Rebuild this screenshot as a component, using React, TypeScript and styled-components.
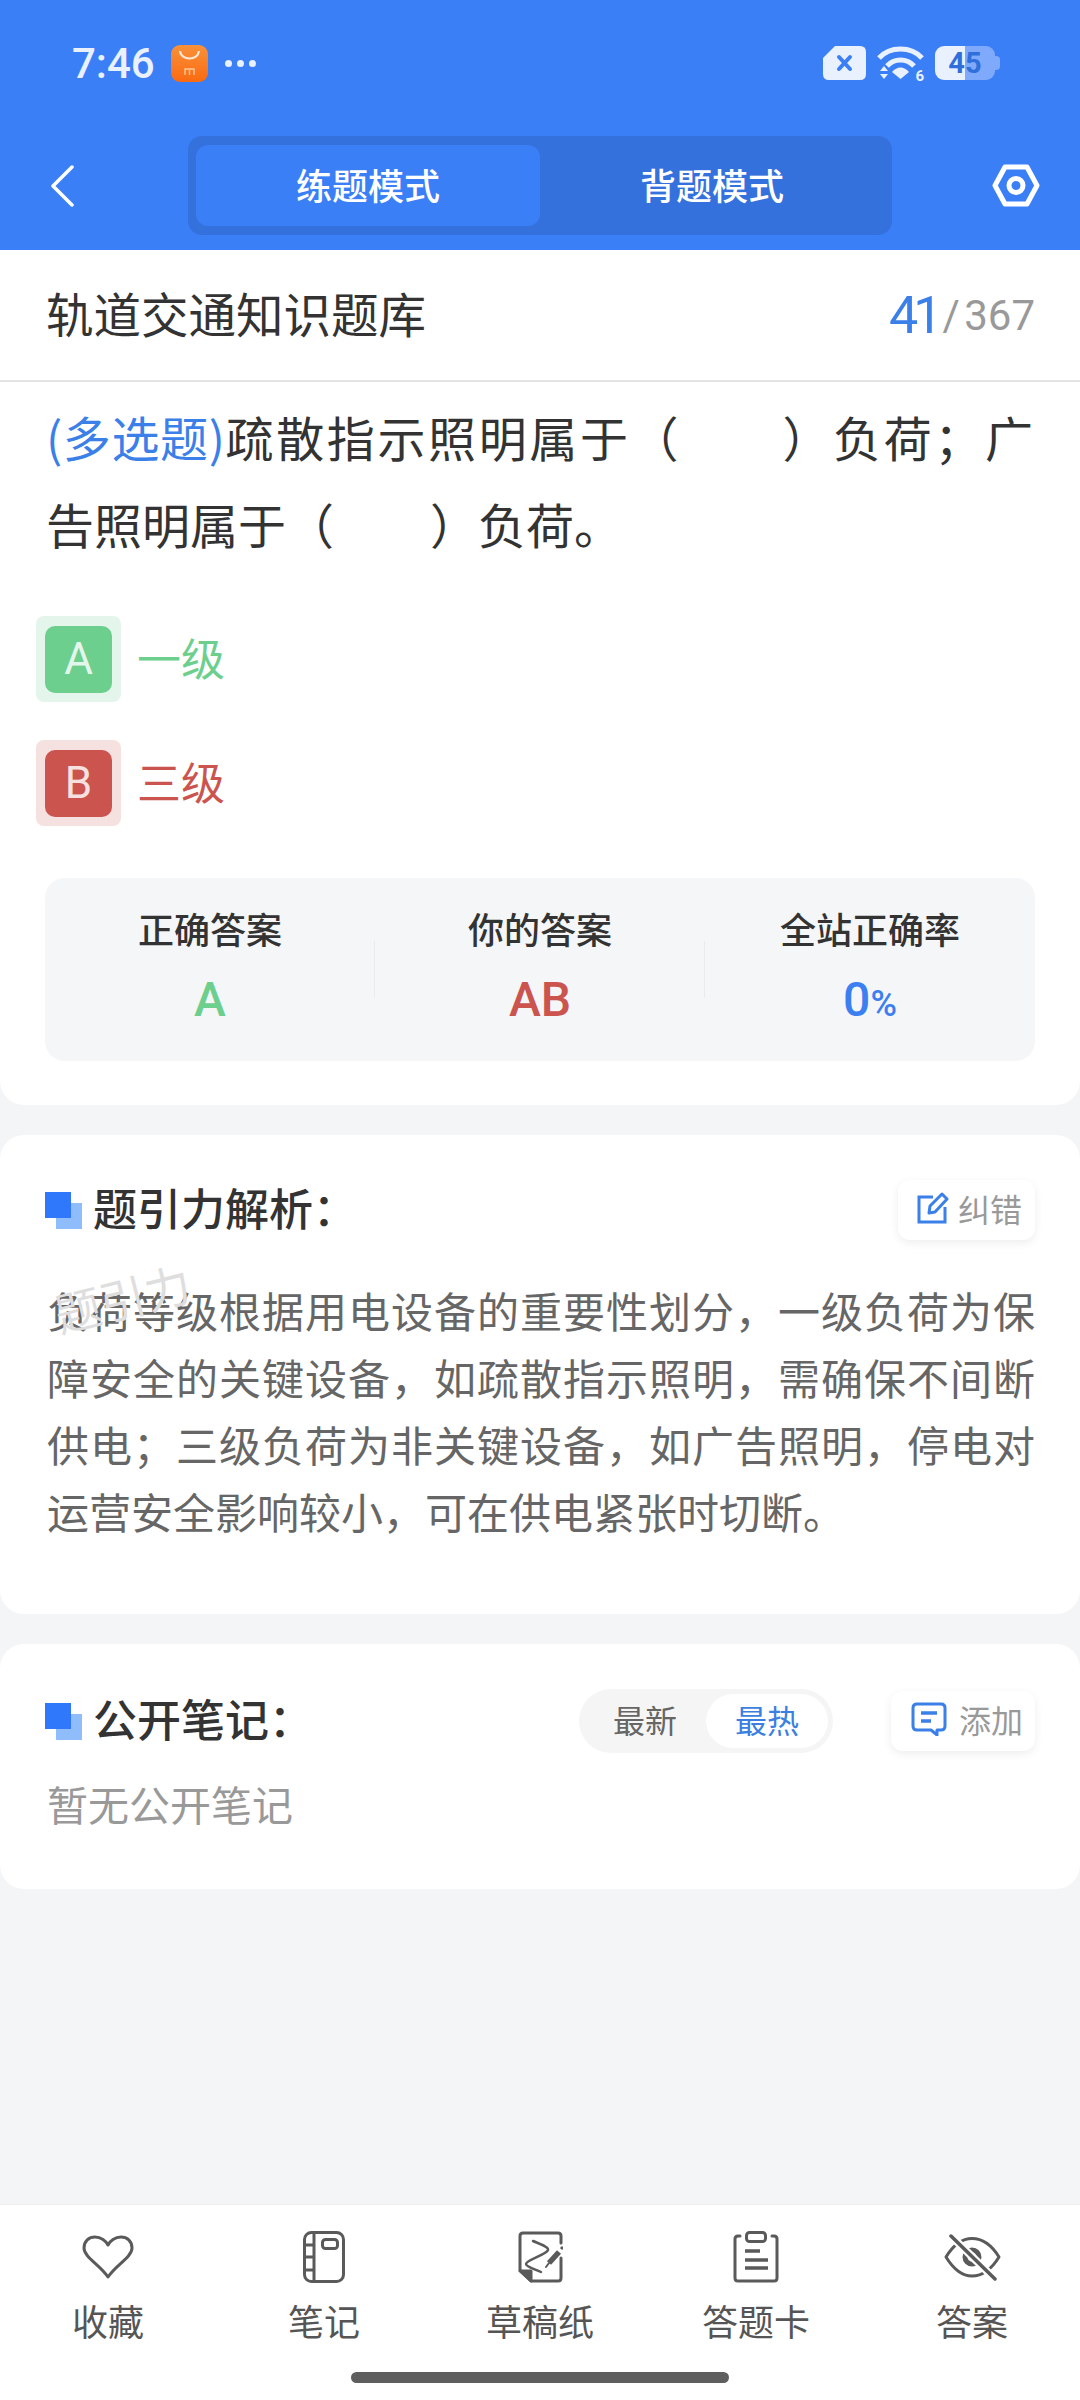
import React from 'react';
import styled, { createGlobalStyle } from 'styled-components';

const GlobalStyle = createGlobalStyle`
  html, body {
    margin: 0;
    padding: 0;
    background: #f4f5f7;
  }
  * {
    box-sizing: border-box;
  }
  body {
    font-family: "Noto Sans CJK SC", "Noto Sans", sans-serif;
    color: #333;
  }
`;

const SUMMARY = [
  { label: '正确答案', value: 'A', color: '#6dcf8e' },
  { label: '你的答案', value: 'AB', color: '#cb544f' },
  { label: '全站正确率', value: '0', unit: '%', color: '#3b7ff0' },
];

function HeartIcon() {
  return (
    <svg width="52" height="44" viewBox="0 0 52 44" fill="none" stroke="#5a5a5a" strokeWidth="3" strokeLinejoin="round">
      <path d="M26 42C18 30 2 22 2 13C2 6 7 2 13 2C19 2 24 6 26 10C28 6 33 2 39 2C45 2 50 6 50 13C50 22 34 30 26 42Z" />
    </svg>
  );
}

function NotebookIcon() {
  return (
    <svg width="42" height="52" viewBox="0 0 42 52" fill="none" stroke="#5a5a5a" strokeWidth="3">
      <rect x="1.500" y="1.500" width="39" height="49" rx="7" />
      <path d="M11 2V50M2 14H11M2 26H11M2 39H11" />
      <rect x="19.500" y="8.500" width="15" height="9" rx="3" />
    </svg>
  );
}

function DraftIcon() {
  return (
    <svg width="45" height="52" viewBox="0 0 45 52" fill="none" stroke="#5a5a5a" strokeWidth="3" strokeLinejoin="round" strokeLinecap="round">
      <path d="M43 12V5Q43 2 40 2H5Q2 2 2 5V39L13 50H40Q43 50 43 47V27" />
      <path d="M2 40H13V50Z" fill="#5a5a5a" />
      <path d="M15 10C22 13 31 16 30 19C28 24 8 29 8 33C8 36 17 38 23 41" strokeWidth="2.500" />
      <path d="M31 32L41 21" strokeWidth="5.500" strokeLinecap="butt" />
      <path d="M28 36L31 32" strokeWidth="2" />
      <path d="M43 18L45 16" strokeWidth="3" strokeLinecap="butt" />
    </svg>
  );
}

function ClipboardIcon() {
  return (
    <svg width="46" height="52" viewBox="0 0 46 52" fill="none" stroke="#5a5a5a" strokeWidth="3" strokeLinecap="round">
      <path d="M7 5H5Q2 5 2 8V47Q2 50 5 50H41Q44 50 44 47V8Q44 5 41 5H39" />
      <rect x="13.500" y="1.500" width="19" height="9" rx="3" />
      <path d="M12 20H27M12 29H35M12 37H35" strokeWidth="3.500" strokeLinecap="butt" />
    </svg>
  );
}

function EyeOffIcon() {
  return (
    <svg width="57" height="47" viewBox="0 0 57 47" fill="none" stroke="#5a5a5a" strokeWidth="3" strokeLinejoin="round">
      <path d="M2 23C10 10 18 4.500 28 4.500C38 4.500 47 10 55 23C47 36 38 42 28 42C18 42 10 36 2 23Z" />
      <circle cx="28" cy="23" r="7" strokeWidth="5" />
      <path d="M7 2L51 45" stroke="#ffffff" strokeWidth="8" />
      <path d="M7 2L51 45" strokeWidth="3.500" strokeLinecap="round" />
    </svg>
  );
}

const TOOLS = [
  { label: '收藏', icon: <HeartIcon /> },
  { label: '笔记', icon: <NotebookIcon /> },
  { label: '草稿纸', icon: <DraftIcon /> },
  { label: '答题卡', icon: <ClipboardIcon /> },
  { label: '答案', icon: <EyeOffIcon /> },
];

function SectionMark() {
  return (
    <svg width="37" height="37" viewBox="0 0 37 37">
      <rect x="11" y="11" width="26" height="26" fill="#8fbcfb" />
      <rect x="0" y="0" width="26" height="26" fill="#2f78fb" />
    </svg>
  );
}

function App() {
  return (
    <>
      <GlobalStyle />
      <Page>
        <Header>
          <StatusBar>
            <StatusLeft>
              <Time>7:46</Time>
              <svg width="37" height="37" viewBox="0 0 37 37">
                <defs>
                  <linearGradient id="shop" x1="0" y1="0" x2="0" y2="1">
                    <stop offset="0" stopColor="#f9913a" />
                    <stop offset="1" stopColor="#fb6a10" />
                  </linearGradient>
                </defs>
                <rect width="37" height="37" rx="9" fill="url(#shop)" />
                <path d="M9 6C10 16 27 16 28 6" fill="none" stroke="#ffe9d6" strokeWidth="2.200" />
                <path d="M14 30V24H23V30M18.500 25V30" fill="none" stroke="#ffc79c" strokeWidth="1.400" />
              </svg>
              <Dots>
                <i />
                <i />
                <i />
              </Dots>
            </StatusLeft>
            <StatusRight>
              <svg width="43" height="34" viewBox="0 0 43 34">
                <path d="M12 0H37Q43 0 43 6V28Q43 34 37 34H6Q0 34 0 28V12Z" fill="#eaf1fe" />
                <path d="M16 11L27 23M27 11L16 23" stroke="#3b7ff6" strokeWidth="4" strokeLinecap="round" />
              </svg>
              <WifiBox>
                <svg width="47" height="36" viewBox="0 0 47 36" fill="none">
                  <path d="M2 12C13 0 34 0 45 12" stroke="#eaf1fe" strokeWidth="5" />
                  <path d="M10 20C17 12 30 12 37 20" stroke="#eaf1fe" strokeWidth="5" />
                  <path d="M15 26C20 20 27 20 32 26L23.500 33Z" fill="#eaf1fe" />
                  <path d="M3 25L7 20L11 25ZM3 28L7 33L11 28Z" fill="#eaf1fe" />
                </svg>
                <WifiBand>6</WifiBand>
              </WifiBox>
              <Battery>
                <BatteryBody>45</BatteryBody>
              </Battery>
            </StatusRight>
          </StatusBar>
          <NavBar>
            <BackSlot>
              <svg width="24" height="42" viewBox="0 0 24 42" fill="none" stroke="#fff" strokeWidth="3.500" strokeLinecap="round" strokeLinejoin="round">
                <path d="M22 2L3 21L22 40" />
              </svg>
            </BackSlot>
            <ModeSwitch>
              <ModeTab $active>练题模式</ModeTab>
              <ModeTab>背题模式</ModeTab>
            </ModeSwitch>
            <SettingSlot>
              <svg width="48" height="43" viewBox="0 0 48 43" fill="none" stroke="#fff" strokeWidth="5" strokeLinejoin="round">
                <path d="M13 3H35L45 21.500L35 40H13L3 21.500Z" />
                <circle cx="24" cy="21.500" r="7" />
              </svg>
            </SettingSlot>
          </NavBar>
        </Header>

        <Main>
          <QuestionCard>
            <TitleRow>
              <BankTitle>轨道交通知识题库</BankTitle>
              <Counter>
                <CounterNow>41</CounterNow>
                <CounterTotal>/ 367</CounterTotal>
              </Counter>
            </TitleRow>
            <QuestionText>
              <QuestionLine $fill>
                <QuestionType>(多选题)</QuestionType>疏散指示照明属于（　　）负荷；广
              </QuestionLine>
              <QuestionLine>告照明属于（　　）负荷。</QuestionLine>
            </QuestionText>
            <Options>
              <Option>
                <OptionBadge $bg="#e4f6ec" $fg="#6dcf8e">
                  <span>A</span>
                </OptionBadge>
                <OptionText $color="#6dcf8e">一级</OptionText>
              </Option>
              <Option>
                <OptionBadge $bg="#f6e1e1" $fg="#cb544f">
                  <span>B</span>
                </OptionBadge>
                <OptionText $color="#cb544f">三级</OptionText>
              </Option>
            </Options>
            <Summary>
              {SUMMARY.map((item) => (
                <SummaryCell key={item.label}>
                  <SummaryLabel>{item.label}</SummaryLabel>
                  <SummaryValue $color={item.color}>
                    {item.value}
                    {item.unit && <small>{item.unit}</small>}
                  </SummaryValue>
                </SummaryCell>
              ))}
            </Summary>
          </QuestionCard>

          <AnalysisCard>
            <SectionHead>
              <SectionTitle>
                <SectionMark />
                <h2>题引力解析：</h2>
              </SectionTitle>
              <SideButton $left={19} $right={13} $gap={9}>
                <svg width="32" height="32" viewBox="0 0 32 32" fill="none" stroke="#3b7fe8" strokeWidth="3">
                  <path d="M16 5H2V30H28V15" />
                  <path d="M12 21L13 14L25 2L30 7L18 20Z" strokeLinejoin="round" />
                </svg>
                纠错
              </SideButton>
            </SectionHead>
            <AnalysisBody>
              <Watermark>题引力</Watermark>
              负荷等级根据用电设备的重要性划分，一级负荷为保障安全的关键设备，如疏散指示照明，需确保不间断供电；三级负荷为非关键设备，如广告照明，停电对运营安全影响较小，可在供电紧张时切断。
            </AnalysisBody>
          </AnalysisCard>

          <NotesCard>
            <SectionHead>
              <SectionTitle>
                <SectionMark />
                <h2>公开笔记：</h2>
              </SectionTitle>
              <NotesTools>
                <SortSwitch>
                  <SortItem>最新</SortItem>
                  <SortItem $active>最热</SortItem>
                </SortSwitch>
                <SideButton $left={20} $right={12} $gap={12}>
                  <svg width="36" height="34" viewBox="0 0 36 34" fill="none" stroke="#3b7fe8" strokeWidth="3" strokeLinejoin="round">
                    <path d="M6 2H30Q34 2 34 6V24Q34 28 30 28H26V33L20 28H6Q2 28 2 24V6Q2 2 6 2Z" />
                    <path d="M10 11H26M10 19H20" strokeWidth="3.500" />
                  </svg>
                  添加
                </SideButton>
              </NotesTools>
            </SectionHead>
            <EmptyNotes>暂无公开笔记</EmptyNotes>
          </NotesCard>
        </Main>

        <Footer>
          <ToolGrid>
            {TOOLS.map((tool) => (
              <Tool key={tool.label}>
                <ToolIcon>{tool.icon}</ToolIcon>
                <ToolLabel>{tool.label}</ToolLabel>
              </Tool>
            ))}
          </ToolGrid>
          <HomeBar />
        </Footer>
      </Page>
    </>
  );
}
export default App;

const Page = styled.div`
  display: flex;
  flex-direction: column;
  width: 1080px;
  height: 2400px;
  overflow: hidden;
`;

const Header = styled.header`
  height: 250px;
  background: #3b7ff6;
`;

const StatusBar = styled.div`
  display: flex;
  justify-content: space-between;
  height: 136px;
  padding: 45px 80px 0 72px;
`;

const StatusLeft = styled.div`
  display: flex;
  align-items: center;
  height: 37px;
  gap: 16px;
`;

const Time = styled.span`
  font-family: Roboto, sans-serif;
  font-size: 42px;
  font-weight: 500;
  color: #eaf1fe;
`;

const Dots = styled.div`
  display: flex;
  gap: 5px;
  margin-left: 1px;
  & > i {
    width: 7px;
    height: 7px;
    border-radius: 50%;
    background: #eaf1fe;
  }
`;

const StatusRight = styled.div`
  display: flex;
  align-items: flex-start;
  gap: 11px;
  padding-top: 1px;
`;

const WifiBox = styled.div`
  position: relative;
  width: 47px;
  height: 36px;
`;

const WifiBand = styled.span`
  position: absolute;
  right: 0;
  bottom: -3px;
  font-family: Roboto, sans-serif;
  font-size: 15px;
  font-weight: 700;
  line-height: 18px;
  color: #eaf1fe;
`;

const Battery = styled.div`
  position: relative;
  width: 65px;
  height: 34px;
  &::after {
    content: '';
    position: absolute;
    right: 0;
    top: 10px;
    width: 5px;
    height: 14px;
    border-radius: 0 4px 4px 0;
    background: #7fa9fa;
  }
`;

const BatteryBody = styled.div`
  width: 60px;
  height: 34px;
  border-radius: 9px;
  background: linear-gradient(90deg, #eaf1fe 0 30px, #7fa9fa 30px 100%);
  color: #2f6fdb;
  font-family: Roboto, sans-serif;
  font-size: 29px;
  font-weight: 700;
  line-height: 34px;
  text-align: center;
`;

const NavBar = styled.div`
  display: grid;
  grid-template-columns: 188px 704px 1fr;
  align-items: center;
  height: 99px;
`;

const BackSlot = styled.div`
  display: flex;
  padding-left: 50px;
`;

const SettingSlot = styled.div`
  display: flex;
  justify-content: flex-end;
  padding-right: 40px;
`;

const ModeSwitch = styled.div`
  display: flex;
  height: 99px;
  padding: 9px 8px;
  border-radius: 14px;
  background: #3571dc;
`;

const ModeTab = styled.div<{ $active?: boolean }>`
  flex: 1;
  display: flex;
  align-items: center;
  justify-content: center;
  padding-bottom: 4px;
  border-radius: 12px;
  background: ${(p) => (p.$active ? '#3b7ff6' : 'transparent')};
  color: #fff;
  font-size: 36px;
  font-weight: 500;
`;

const Main = styled.main`
  flex: 1;
  display: flex;
  flex-direction: column;
  gap: 30px;
  background: #f4f5f7;
`;

const QuestionCard = styled.section`
  background: #fff;
  border-radius: 0 0 24px 24px;
  padding-bottom: 44px;
`;

const TitleRow = styled.div`
  display: flex;
  align-items: center;
  justify-content: space-between;
  height: 132px;
  padding: 0 45px 6px 46px;
  border-bottom: 2px solid #e4e4e4;
`;

const BankTitle = styled.h1`
  margin: 0;
  font-size: 47.500px;
  font-weight: 400;
  color: #333;
`;

const Counter = styled.div`
  display: flex;
  align-items: baseline;
  gap: 5px;
  font-family: Roboto, sans-serif;
`;

const CounterNow = styled.span`
  font-size: 52px;
  letter-spacing: -5px;
  color: #3b7fe8;
  transform: translateY(3px);
`;

const CounterTotal = styled.span`
  font-size: 42px;
  word-spacing: -6px;
  color: #999;
`;

const QuestionText = styled.div`
  padding: 11px 47px 3px 46px;
  font-size: 48px;
  line-height: 87px;
  color: #333;
`;

const QuestionLine = styled.div<{ $fill?: boolean }>`
  text-align: ${(p) => (p.$fill ? 'justify' : 'left')};
  text-align-last: ${(p) => (p.$fill ? 'justify' : 'left')};
`;

const QuestionType = styled.span`
  letter-spacing: -2px;
  color: #3b7fe8;
`;

const Options = styled.div`
  display: flex;
  flex-direction: column;
  gap: 38px;
  margin: 46px 0 52px 36px;
`;

const Option = styled.div`
  display: flex;
  align-items: center;
  gap: 16px;
`;

const OptionBadge = styled.div<{ $bg: string; $fg: string }>`
  display: flex;
  align-items: center;
  justify-content: center;
  width: 85px;
  height: 86px;
  border-radius: 8px;
  background: ${(p) => p.$bg};
  & > span {
    display: flex;
    align-items: center;
    justify-content: center;
    width: 67px;
    height: 67px;
    border-radius: 10px;
    background: ${(p) => p.$fg};
    color: ${(p) => p.$bg};
    font-family: Roboto, sans-serif;
    font-size: 44px;
  }
`;

const OptionText = styled.span<{ $color: string }>`
  padding-bottom: 5px;
  font-size: 44px;
  color: ${(p) => p.$color};
`;

const Summary = styled.div`
  display: grid;
  grid-template-columns: repeat(3, 330px);
  height: 183px;
  margin: 0 45px;
  border-radius: 20px;
  background: #f4f6f8;
`;

const SummaryCell = styled.div`
  position: relative;
  display: flex;
  flex-direction: column;
  align-items: center;
  gap: 22px;
  padding-top: 27px;
  &:not(:last-child)::after {
    content: '';
    position: absolute;
    right: 0;
    top: 63px;
    width: 1px;
    height: 57px;
    background: #e9ebee;
  }
`;

const SummaryLabel = styled.div`
  font-size: 36px;
  line-height: 46px;
  font-weight: 500;
  color: #333;
`;

const SummaryValue = styled.div<{ $color: string }>`
  font-family: Roboto, sans-serif;
  font-size: 48px;
  line-height: 54px;
  font-weight: 500;
  color: ${(p) => p.$color};
  & > small {
    font-size: 36px;
  }
`;

const AnalysisCard = styled.section`
  background: #fff;
  border-radius: 24px;
  padding: 45px 45px 70px 47px;
`;

const NotesCard = styled.section`
  background: #fff;
  border-radius: 24px;
  padding: 45px 45px 56px 47px;
`;

const SectionHead = styled.div`
  display: flex;
  align-items: center;
  justify-content: space-between;
`;

const SectionTitle = styled.div`
  display: flex;
  align-items: center;
  gap: 11px;
  margin-left: -2px;
  & > h2 {
    margin: 0;
    padding-bottom: 6px;
    font-size: 44px;
    font-weight: 500;
    line-height: 54px;
    color: #333;
  }
`;

const SideButton = styled.div<{ $left: number; $right: number; $gap: number }>`
  display: flex;
  align-items: center;
  gap: ${(p) => p.$gap}px;
  height: 60px;
  padding: 0 ${(p) => p.$right}px 4px ${(p) => p.$left}px;
  border-radius: 12px;
  background: #fff;
  box-shadow: 0 3px 10px rgba(0, 0, 0, 0.07);
  font-size: 32px;
  color: #999;
`;

const AnalysisBody = styled.div`
  position: relative;
  margin-top: 36px;
  font-size: 42px;
  line-height: 67px;
  text-align: justify;
  color: #666;
`;

const Watermark = styled.span`
  position: absolute;
  left: 6px;
  top: -9px;
  font-size: 46px;
  line-height: 60px;
  color: #dedede;
  transform: rotate(-14deg);
`;

const NotesTools = styled.div`
  display: flex;
  align-items: center;
  gap: 58px;
`;

const SortSwitch = styled.div`
  display: flex;
  height: 64px;
  padding: 5px;
  border-radius: 32px;
  background: #f5f5f5;
`;

const SortItem = styled.div<{ $active?: boolean }>`
  display: flex;
  align-items: center;
  justify-content: center;
  width: 122px;
  padding-bottom: 5px;
  border-radius: 27px;
  background: ${(p) => (p.$active ? '#fff' : 'transparent')};
  color: ${(p) => (p.$active ? '#3b7fe0' : '#666')};
  font-size: 32px;
`;

const EmptyNotes = styled.div`
  margin-top: 20px;
  font-size: 41px;
  line-height: 60px;
  color: #999;
`;

const Footer = styled.footer`
  height: 196px;
  padding-top: 22px;
  border-top: 1px solid #eeeeee;
  background: #fff;
`;

const ToolGrid = styled.div`
  display: grid;
  grid-template-columns: repeat(5, 216px);
`;

const Tool = styled.div`
  display: flex;
  flex-direction: column;
  align-items: center;
`;

const ToolIcon = styled.div`
  display: flex;
  align-items: center;
  justify-content: center;
  height: 60px;
  margin-bottom: 9px;
`;

const ToolLabel = styled.div`
  font-size: 36px;
  line-height: 48px;
  color: #555;
`;

const HomeBar = styled.div`
  width: 378px;
  height: 11px;
  margin: 28px auto 0;
  border-radius: 6px;
  background: #5e5e5e;
`;
